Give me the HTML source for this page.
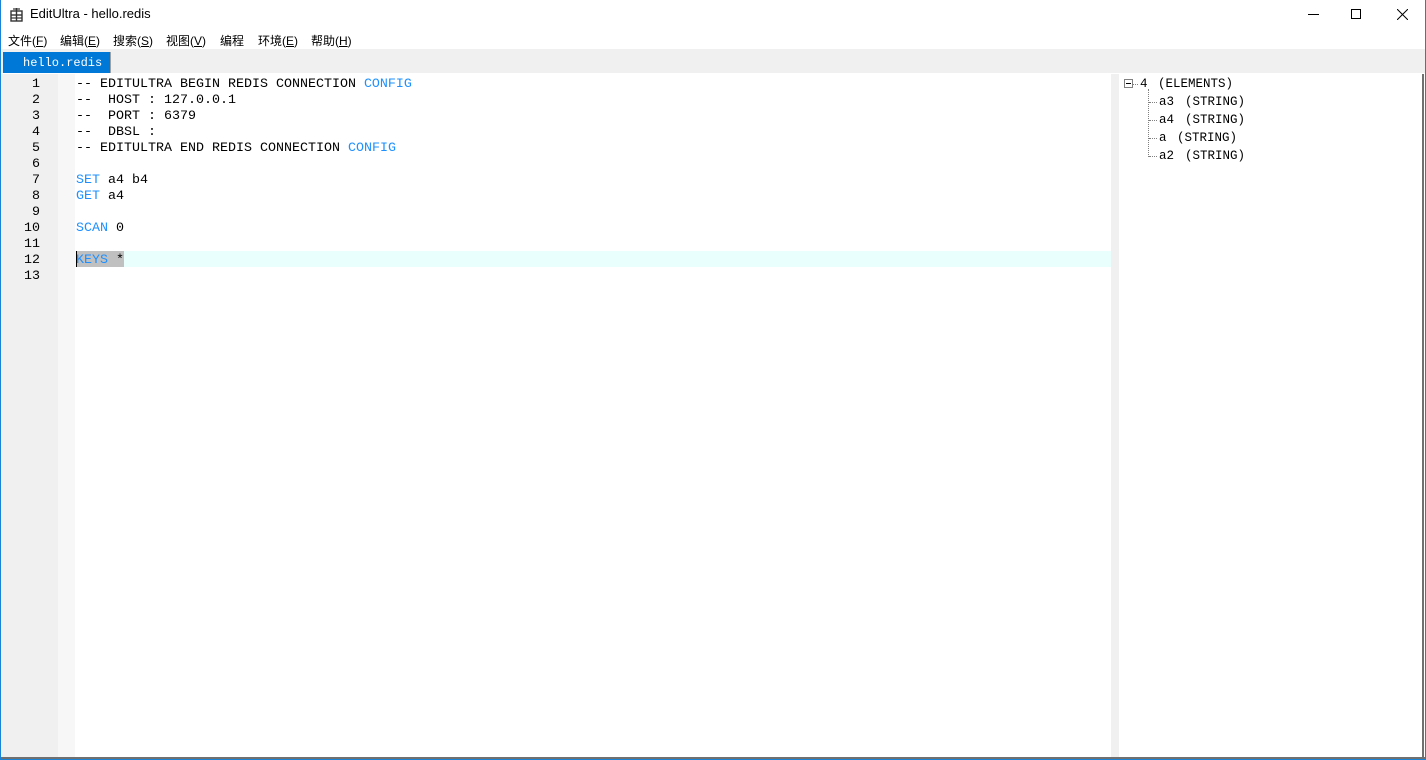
<!DOCTYPE html>
<html><head><meta charset="utf-8"><style>
*{margin:0;padding:0;box-sizing:border-box}
html,body{width:1426px;height:760px;overflow:hidden;background:#fff;position:relative}
.a{position:absolute}
.ui{font-family:"Segoe UI","Liberation Sans","Noto Sans CJK SC",sans-serif;font-size:12px;color:#000;white-space:nowrap}
.mono{font-family:"Liberation Mono","Noto Sans CJK SC",monospace;font-size:13.33px;line-height:16px;white-space:pre;color:#000}
.t{font-family:"Liberation Mono",monospace;font-size:12.5px;line-height:18px;white-space:pre;color:#000;position:absolute}
.k{color:#1e90ff}
.menu span{position:absolute;top:0;white-space:nowrap}
</style></head><body>
<div class="a" style="left:0;top:0;width:1426px;height:760px;border:1px solid #1883d7;border-top:none"></div>
<div class="a" style="left:10px;top:8px;width:13px;height:14px">
<svg width="13" height="14" viewBox="0 0 13 14"><rect x="1" y="3" width="11" height="10" fill="none" stroke="#333" stroke-width="1.4"/><line x1="1" y1="7" x2="12" y2="7" stroke="#333" stroke-width="1.4"/><line x1="1" y1="10" x2="12" y2="10" stroke="#333" stroke-width="1.2"/><line x1="6.5" y1="0" x2="6.5" y2="13" stroke="#333" stroke-width="1.4"/><line x1="3" y1="1" x2="10" y2="1" stroke="#333" stroke-width="1.2"/></svg></div>
<div class="a ui" style="left:30px;top:6px;font-size:13px">EditUltra - hello.redis</div>
<div class="a" style="left:1308px;top:14px;width:11px;height:1px;background:#000"></div>
<div class="a" style="left:1351px;top:9px;width:10px;height:10px;border:1px solid #000"></div>
<svg class="a" style="left:1397px;top:9px" width="11" height="11"><path d="M0 0L11 11M11 0L0 11" stroke="#000" stroke-width="1"/></svg>
<div class="a ui menu" style="left:8px;top:32px;width:400px;height:16px">
<span style="left:0">文件(<u>F</u>)</span><span style="left:52px">编辑(<u>E</u>)</span><span style="left:105px">搜索(<u>S</u>)</span><span style="left:158px">视图(<u>V</u>)</span><span style="left:212px">编程</span><span style="left:250px">环境(<u>E</u>)</span><span style="left:303px">帮助(<u>H</u>)</span></div>
<div class="a" style="left:1px;top:49px;width:1424px;height:24px;background:#f0f0f0"></div>
<div class="a" style="left:3px;top:52px;width:107px;height:21px;background:#0078d7"></div>
<div class="a" style="left:110px;top:52px;width:1px;height:21px;background:#a0a0a0"></div>
<div class="a mono" style="left:23px;top:55px;color:#fff;font-size:12px">hello.redis</div>
<div class="a" style="left:1px;top:74px;width:57px;height:683px;background:#f0f0f0"></div>
<div class="a" style="left:58px;top:74px;width:17px;height:683px;background:#f7f7f7"></div>
<div class="a mono" style="left:14px;top:77px;width:26px;text-align:right">1
2
3
4
5
6
7
8
9
10
11
12
13</div>
<div class="a" style="left:75px;top:251px;width:1036px;height:16px;background:#e8fffe"></div>
<div class="a" style="left:76px;top:251px;width:48px;height:16px;background:#c0c0c0"></div>
<div class="a" style="left:76px;top:251px;width:1px;height:16px;background:#000"></div>
<div class="a mono" style="left:76px;top:77px">-- EDITULTRA BEGIN REDIS CONNECTION <span class="k">CONFIG</span>
--  HOST : 127.0.0.1
--  PORT : 6379
--  DBSL :
-- EDITULTRA END REDIS CONNECTION <span class="k">CONFIG</span>

<span class="k">SET</span> a4 b4
<span class="k">GET</span> a4

<span class="k">SCAN</span> 0

<span class="k">KEYS</span> *
</div>
<div class="a" style="left:1111px;top:74px;width:8px;height:683px;background:#f0f0f0"></div>
<div class="a" style="left:1124px;top:79px;width:9px;height:9px;border:1px solid #808080;background:#fff"></div>
<div class="a" style="left:1126px;top:83px;width:5px;height:1px;background:#000"></div>
<div class="a" style="left:1133px;top:84px;width:5px;border-top:1px dotted #808080"></div>
<div class="a" style="left:1148px;top:89px;height:68px;border-left:1px dotted #808080"></div>
<div class="a" style="left:1149px;top:102px;width:8px;border-top:1px dotted #808080"></div>
<div class="a" style="left:1149px;top:120px;width:8px;border-top:1px dotted #808080"></div>
<div class="a" style="left:1149px;top:138px;width:8px;border-top:1px dotted #808080"></div>
<div class="a" style="left:1149px;top:156px;width:8px;border-top:1px dotted #808080"></div>
<div class="t" style="left:1140px;top:75px">4</div><div class="t" style="left:1158px;top:75px">(ELEMENTS)</div>
<div class="t" style="left:1159px;top:93px">a3</div><div class="t" style="left:1185px;top:93px">(STRING)</div>
<div class="t" style="left:1159px;top:111px">a4</div><div class="t" style="left:1185px;top:111px">(STRING)</div>
<div class="t" style="left:1159px;top:129px">a</div><div class="t" style="left:1177px;top:129px">(STRING)</div>
<div class="t" style="left:1159px;top:147px">a2</div><div class="t" style="left:1185px;top:147px">(STRING)</div>
<div class="a" style="left:1px;top:757px;width:1424px;height:2px;background:#707070"></div>
<div class="a" style="left:1422px;top:74px;width:2px;height:685px;background:#707070"></div>
</body></html>
